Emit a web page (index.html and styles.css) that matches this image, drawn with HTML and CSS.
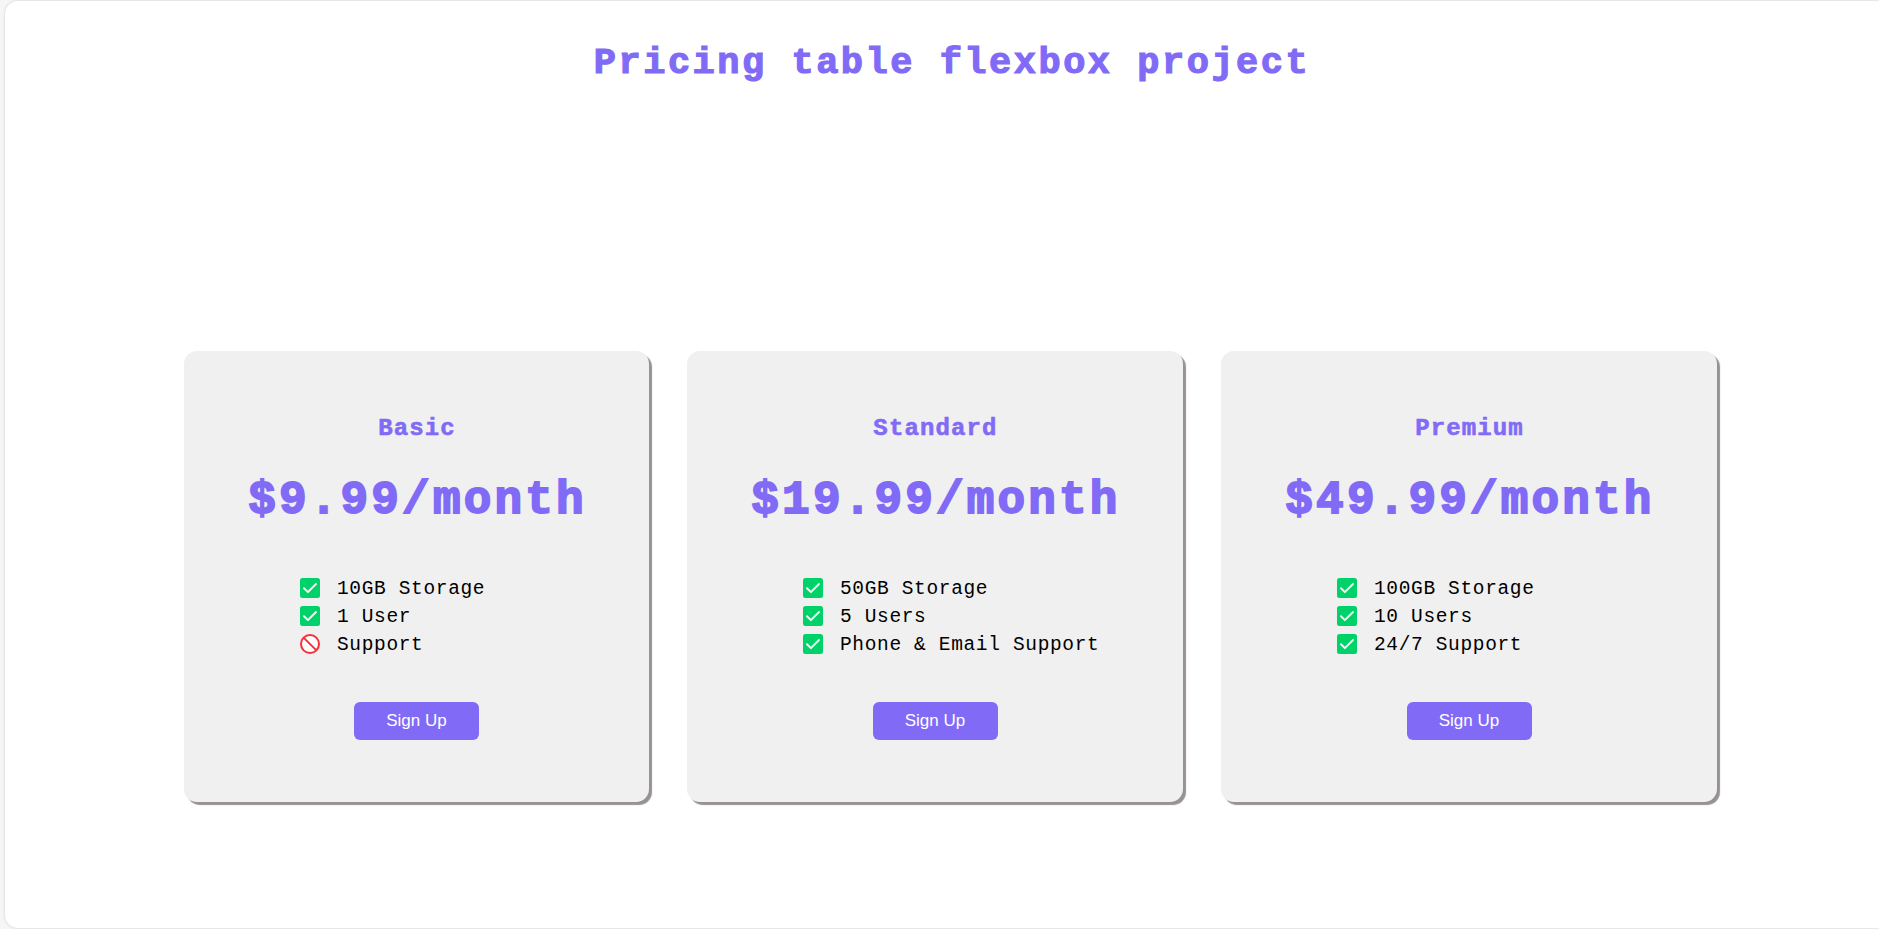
FILE: index.html
```
<!DOCTYPE html>
<html lang="en">
<head>
<meta charset="utf-8">
<title>Pricing table flexbox project</title>
<link rel="stylesheet" href="styles.css">
</head>
<body>
<svg class="sprite" aria-hidden="true">
  <symbol id="check" viewBox="0 0 20 20"><rect width="20" height="20" rx="2.5" fill="#00d26a"/><path d="M4 10.3 7.9 14.1 16 6" fill="none" stroke="#f4f4f4" stroke-width="2" stroke-linecap="round" stroke-linejoin="round"/></symbol>
  <symbol id="no" viewBox="0 0 20 20"><circle cx="10" cy="10" r="9" fill="#fff" stroke="#f92f35" stroke-width="2"/><path d="M3.6 3.6 16.4 16.4" stroke="#f92f35" stroke-width="2"/></symbol>
</svg>
<div class="page">
  <h1 class="title">Pricing table flexbox project</h1>
  <main class="cards">
    <section class="card basic">
      <h2 class="plan">Basic</h2>
      <p class="price">$9.99/month</p>
      <ul class="features">
        <li><svg class="icon"><use href="#check"/></svg>10GB Storage</li>
        <li><svg class="icon"><use href="#check"/></svg>1 User</li>
        <li><svg class="icon"><use href="#no"/></svg>Support</li>
      </ul>
      <button class="signup">Sign Up</button>
    </section>
    <section class="card">
      <h2 class="plan">Standard</h2>
      <p class="price">$19.99/month</p>
      <ul class="features">
        <li><svg class="icon"><use href="#check"/></svg>50GB Storage</li>
        <li><svg class="icon"><use href="#check"/></svg>5 Users</li>
        <li><svg class="icon"><use href="#check"/></svg>Phone &amp; Email Support</li>
      </ul>
      <button class="signup">Sign Up</button>
    </section>
    <section class="card">
      <h2 class="plan">Premium</h2>
      <p class="price">$49.99/month</p>
      <ul class="features">
        <li><svg class="icon"><use href="#check"/></svg>100GB Storage</li>
        <li><svg class="icon"><use href="#check"/></svg>10 Users</li>
        <li><svg class="icon"><use href="#check"/></svg>24/7 Support</li>
      </ul>
      <button class="signup">Sign Up</button>
    </section>
  </main>
</div>
</body>
</html>
```
FILE: styles.css
```
* { box-sizing: border-box; }
html { overflow: hidden; }
body { margin: 0; height: 929px; padding: 1px 0 1px 5px; background: #f6f6f6; font-family: "Liberation Mono", monospace; overflow: hidden; }
.sprite { display: none; }
.page { height: 927px; padding-top: 38px; background: #fff; border-radius: 13px 0 0 13px; box-shadow: 0 0 3px #ccc; }
.title { margin: 0 0 0 20px; height: 48px; line-height: 48px; text-align: center; font-size: 37px; letter-spacing: 2.5px; color: #816bf6; -webkit-text-stroke: 1.2px #816bf6; }
.cards { display: flex; gap: 38px; margin: 264px 0 0 179px; }
.card { display: flex; flex-direction: column; align-items: center; width: 496px; height: 451px; padding-top: 62px; background: #f0f0f0; border-radius: 13px; box-shadow: 3px 3px 1px #979191; }
.basic { width: 465px; }
.plan { margin: 0; padding-left: 1px; height: 32px; line-height: 32px; font-size: 24px; letter-spacing: 1.13px; color: #816bf6; -webkit-text-stroke: .6px #816bf6; }
.price { margin: 26px 0 0; padding-left: 2px; height: 60px; line-height: 60px; font-size: 46px; font-weight: bold; letter-spacing: 3.17px; color: #816bf6; -webkit-text-stroke: 1.8px #816bf6; }
.features { align-self: stretch; margin: 44px 0 0; padding: 0 0 0 116px; list-style: none; font-size: 19.5px; letter-spacing: .65px; color: #000; }
.features li { display: flex; align-items: center; gap: 17px; height: 28px; line-height: 28px; white-space: pre; }
.icon { width: 20px; height: 20px; margin-bottom: 2px; }
.signup { width: 125px; height: 38px; margin-top: 43px; padding: 0 0 1px; border: 0; border-radius: 6px; background: #816bf6; color: #fff; font: 17px "Liberation Sans", Arial, sans-serif; }
```
